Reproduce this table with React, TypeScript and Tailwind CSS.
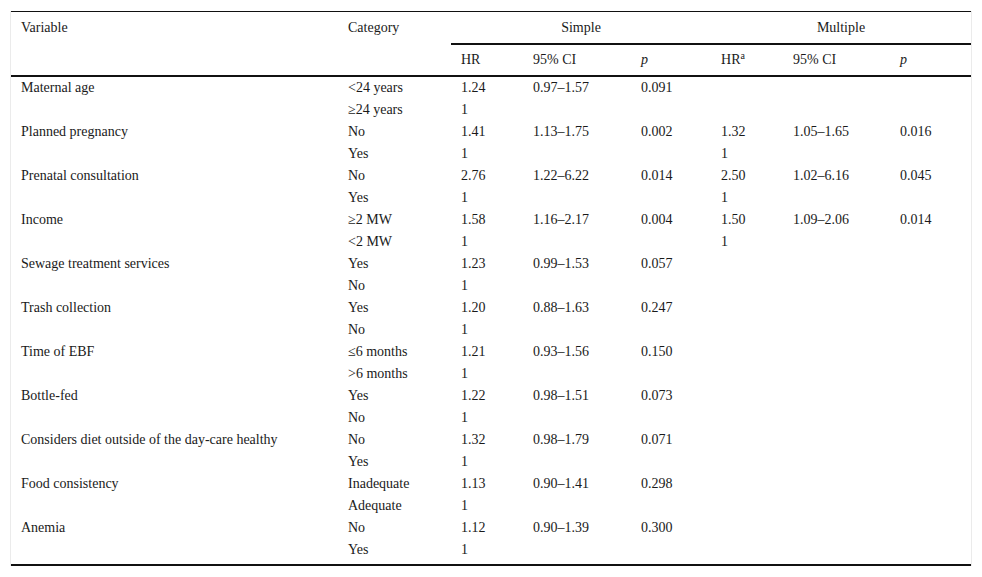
import React from 'react';

type Row = [string, string, string, string, string, string, string, string];

const rows: Row[] = [
  ['Maternal age', '<24 years', '1.24', '0.97–1.57', '0.091', '', '', ''],
  ['', '≥24 years', '1', '', '', '', '', ''],
  ['Planned pregnancy', 'No', '1.41', '1.13–1.75', '0.002', '1.32', '1.05–1.65', '0.016'],
  ['', 'Yes', '1', '', '', '1', '', ''],
  ['Prenatal consultation', 'No', '2.76', '1.22–6.22', '0.014', '2.50', '1.02–6.16', '0.045'],
  ['', 'Yes', '1', '', '', '1', '', ''],
  ['Income', '≥2 MW', '1.58', '1.16–2.17', '0.004', '1.50', '1.09–2.06', '0.014'],
  ['', '<2 MW', '1', '', '', '1', '', ''],
  ['Sewage treatment services', 'Yes', '1.23', '0.99–1.53', '0.057', '', '', ''],
  ['', 'No', '1', '', '', '', '', ''],
  ['Trash collection', 'Yes', '1.20', '0.88–1.63', '0.247', '', '', ''],
  ['', 'No', '1', '', '', '', '', ''],
  ['Time of EBF', '≤6 months', '1.21', '0.93–1.56', '0.150', '', '', ''],
  ['', '>6 months', '1', '', '', '', '', ''],
  ['Bottle-fed', 'Yes', '1.22', '0.98–1.51', '0.073', '', '', ''],
  ['', 'No', '1', '', '', '', '', ''],
  ['Considers diet outside of the day-care healthy', 'No', '1.32', '0.98–1.79', '0.071', '', '', ''],
  ['', 'Yes', '1', '', '', '', '', ''],
  ['Food consistency', 'Inadequate', '1.13', '0.90–1.41', '0.298', '', '', ''],
  ['', 'Adequate', '1', '', '', '', '', ''],
  ['Anemia', 'No', '1.12', '0.90–1.39', '0.300', '', '', ''],
  ['', 'Yes', '1', '', '', '', '', ''],
];

const widths = ['w-[327px]', 'w-[113px]', 'w-[72px]', 'w-[108px]', 'w-[80px]', 'w-[72px]', 'w-[107px]', 'w-[81px]'];

export default function App() {
  return (
    <div className="bg-white w-[982px] h-[577px] pt-[11px] pl-[10px] font-serif text-[14px] text-[#1a1a1a]">
      <div className="w-[962px] border-x border-[#ebebeb]">
        <table className="w-[960px] border-collapse table-fixed font-['Liberation_Serif',serif]">
          <colgroup>
            {widths.map((w, i) => (
              <col key={i} className={w} />
            ))}
          </colgroup>
          <thead>
            <tr className="border-t border-[#111] h-[32px]">
              <th className="text-left font-normal align-top pl-[10px] pt-[5px]">Variable</th>
              <th className="text-left font-normal align-top pl-[10px] pt-[5px]">Category</th>
              <th colSpan={3} className="font-normal align-top pt-[5px] border-b-2 border-[#111]">Simple</th>
              <th colSpan={3} className="font-normal align-top pt-[5px] border-b-2 border-[#111]">Multiple</th>
            </tr>
            <tr className="h-[32px] border-b-2 border-[#111]">
              <th></th>
              <th></th>
              <th className="text-left font-normal pl-[10px]">HR</th>
              <th className="text-left font-normal pl-[10px]">95% CI</th>
              <th className="text-left font-normal italic pl-[10px]">p</th>
              <th className="text-left font-normal pl-[10px]">
                HR<span className="relative -top-[5px] text-[10px]">a</span>
              </th>
              <th className="text-left font-normal pl-[10px]">95% CI</th>
              <th className="text-left font-normal italic pl-[10px]">p</th>
            </tr>
          </thead>
          <tbody className="border-b-2 border-[#111]">
            {rows.map((r, i) => (
              <tr key={i} className="h-[22px]">
                {r.map((c, j) => (
                  <td key={j} className="pl-[10px] pb-[1px] align-middle leading-[21px] whitespace-nowrap">
                    {c}
                  </td>
                ))}
              </tr>
            ))}
            <tr className="h-[4px]">
              <td colSpan={8}></td>
            </tr>
          </tbody>
        </table>
      </div>
    </div>
  );
}
